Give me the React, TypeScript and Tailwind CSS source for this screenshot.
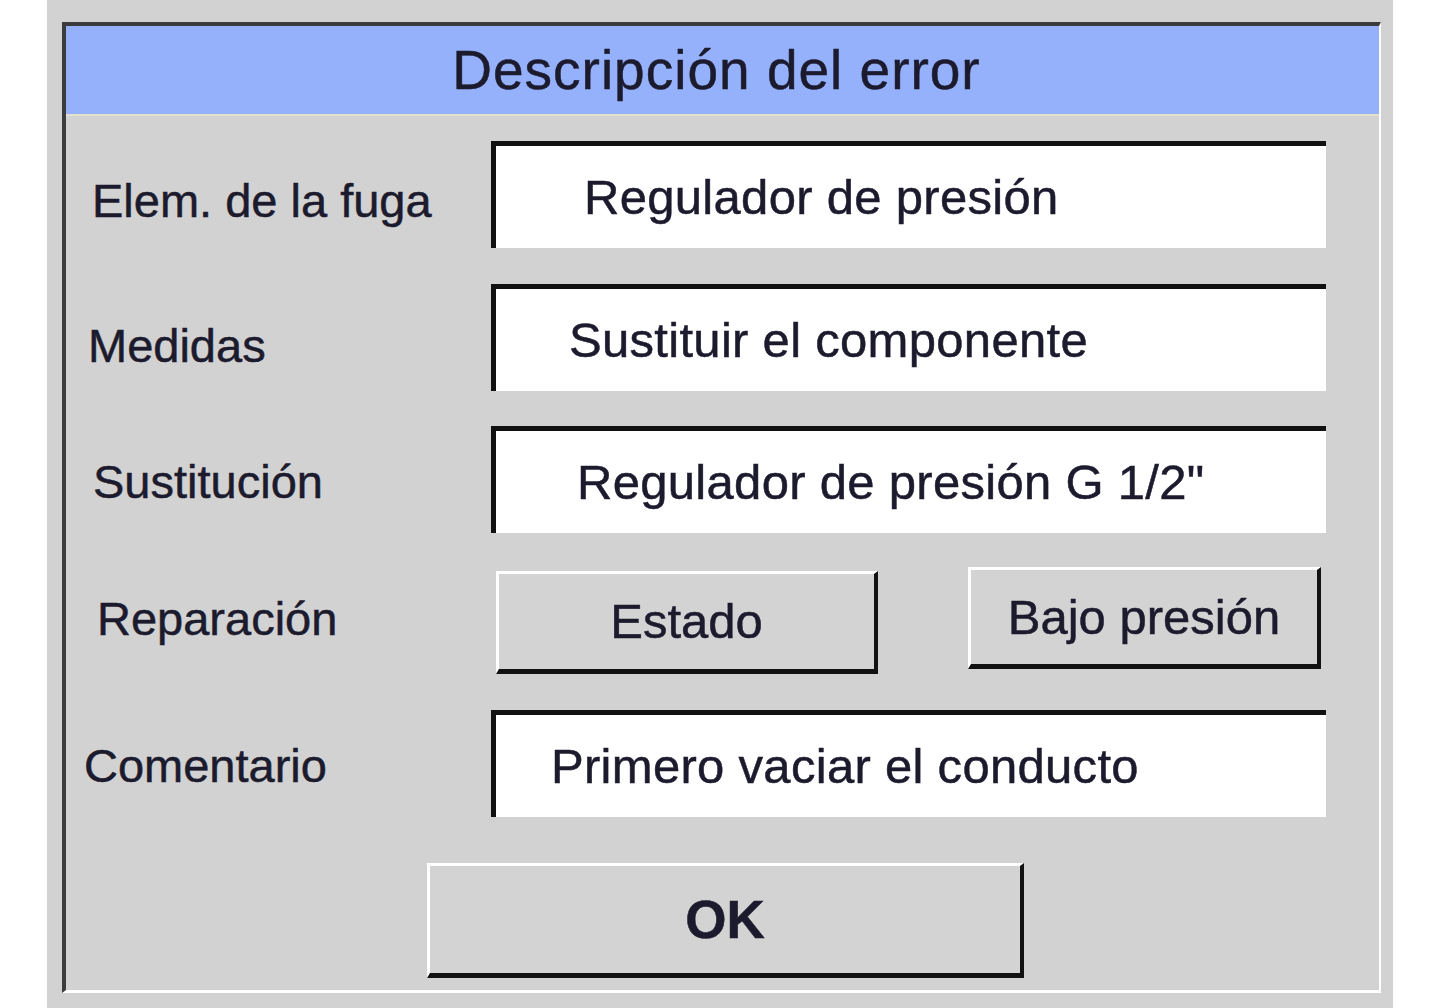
import type { ReactNode } from 'react';

const FONT = "font-['Liberation_Sans',Arial,sans-serif]";
// the screenshot text is a bit heavier than plain Liberation Sans
const INK = 'text-[#1c1b2e] [-webkit-text-stroke:0.5px_#1c1b2e]';

interface FieldRowProps {
  label: string;
  value: string;
  /** left offset of the label inside the label column */
  labelClass: string;
  /** left padding of the value inside the white box */
  valueClass: string;
  className?: string;
}

function FieldRow({ label, value, labelClass, valueClass, className }: FieldRowProps) {
  return (
    <div className={`flex h-[107px] items-center ${className ?? ''}`}>
      <div className={`w-[425px] shrink-0 text-[47px] leading-none ${INK} ${labelClass}`}>{label}</div>
      <div
        className={`flex h-[107px] w-[835px] items-center border-l-[5px] border-t-[5px] border-l-[#111] border-t-[#111] bg-white text-[49px] leading-none tracking-[0.3px] ${INK} ${valueClass}`}
      >
        {value}
      </div>
    </div>
  );
}

function RaisedButton({ children, className }: { children: ReactNode; className?: string }) {
  return (
    <button
      type="button"
      className={`flex items-center justify-center border-l-[3px] border-t-[3px] border-b-[5px] border-r-[4px] border-l-white border-t-white border-b-[#121212] border-r-[#121212] bg-[#d3d3d3] leading-none ${INK} ${className ?? ''}`}
    >
      {children}
    </button>
  );
}

export default function App() {
  return (
    <div className={`min-h-screen bg-white ${FONT}`}>
      <div className="ml-[47px] h-[1008px] w-[1346px] bg-[#d2d2d2] pb-[15px] pl-[15px] pr-[12px] pt-[22px]">
        <div className="flex h-full flex-col border-b-[3px] border-l-4 border-r-2 border-t-4 border-b-white border-l-[#3c3c3c] border-r-white border-t-[#3c3c3c] bg-[#d2d2d2]">
          {/* Title bar */}
          <div
            className={`flex h-[90px] shrink-0 items-center justify-center border-b-2 border-b-[#e4dfcf] bg-[#95b1fb] pr-[12px] text-[55px] leading-none tracking-[1px] ${INK}`}
          >
            Descripción del error
          </div>

          <FieldRow
            className="mt-[25px]"
            label="Elem. de la fuga"
            value="Regulador de presión"
            labelClass="pl-[26px] translate-y-[6px]"
            valueClass="pl-[88px]"
          />
          <FieldRow
            className="mt-[36px]"
            label="Medidas"
            value="Sustituir el componente"
            labelClass="pl-[22px] translate-y-[8px]"
            valueClass="pl-[73px]"
          />
          <FieldRow
            className="mt-[35px]"
            label="Sustitución"
            value={'Regulador de presión G 1/2"'}
            labelClass="pl-[27px] translate-y-[2px]"
            valueClass="pl-[81px]"
          />

          {/* Repair buttons */}
          <div className="mt-[34px] flex h-[107px] items-start">
            <div className={`flex h-[103px] w-[430px] shrink-0 items-center pl-[31px] text-[47px] leading-none ${INK}`}>
              Reparación
            </div>
            <RaisedButton className="mt-[4px] h-[103px] w-[382px] text-[49px]">Estado</RaisedButton>
            <RaisedButton className="ml-[90px] h-[102px] w-[353px] text-[49px]">Bajo presión</RaisedButton>
          </div>

          <FieldRow
            className="mt-[36px]"
            label="Comentario"
            value="Primero vaciar el conducto"
            labelClass="pl-[18px] translate-y-[2px]"
            valueClass="pl-[55px]"
          />

          <div className="mt-[46px] flex justify-center">
            <RaisedButton className="ml-[6px] h-[115px] w-[597px] text-[53px] font-bold">OK</RaisedButton>
          </div>
        </div>
      </div>
    </div>
  );
}
